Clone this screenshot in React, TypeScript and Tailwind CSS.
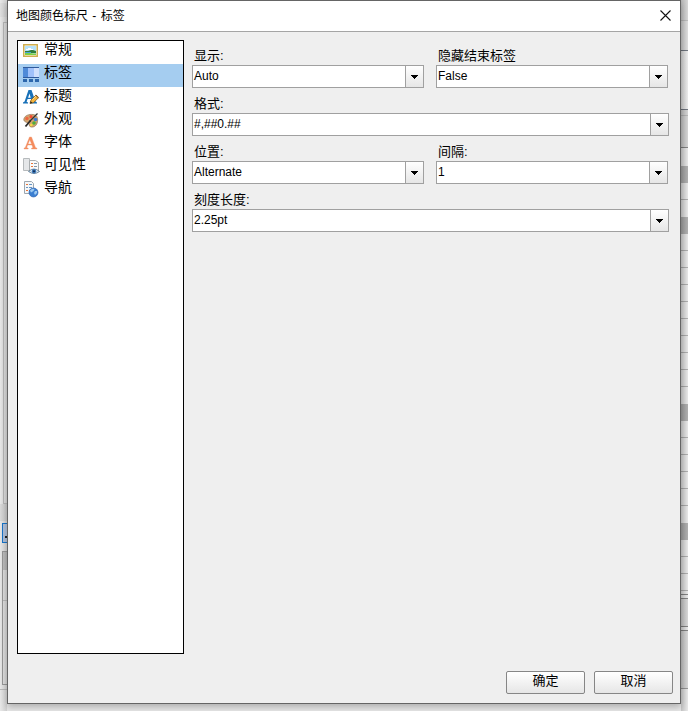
import type { ReactNode } from "react";

const cjk = "font-['Liberation_Sans','Noto_Sans_CJK_SC',sans-serif]";

function GeneralIcon() {
  return (
    <svg width="16" height="16" viewBox="0 1 16 16">
      <rect x="0.75" y="2.75" width="13.5" height="11.5" fill="#fffdf0" stroke="#cfae4e" strokeWidth="1.5" />
      <rect x="2" y="4" width="11" height="9" fill="#b5e2fa" />
      <path d="M3 7h2V6h3v1h2v1H3z" fill="#fff" />
      <path d="M2 9h3l3-1h2l3 1v2H2z" fill="#2f7d3c" />
      <path d="M2 11h5l3 .5h3V13H2z" fill="#7cd044" />
      <path d="M2 10.500h6" stroke="#48a5d8" />
    </svg>
  );
}

function LabelsIcon() {
  return (
    <svg width="16" height="16" viewBox="0 -1 16 16" shapeRendering="crispEdges">
      <rect width="16" height="11" fill="#2f5a9c" />
      <rect y="1" width="5" height="9" fill="#4f8ad8" />
      <rect x="5" y="1" width="6" height="9" fill="#a0c1fa" />
      <rect x="11" y="1" width="5" height="9" fill="#cfdffc" />
      <path d="M0 12h4v3H0zM6 12h4v3H6zM12 12h4v3h-4z" fill="#2d67ac" />
    </svg>
  );
}

function TitleIcon() {
  return (
    <svg width="16" height="16" viewBox="0 0 16 16">
      <path d="M5.5 1h3l4 11.5 1.5 1v1H8v-1l1-.7-.8-2.800H4.600l-1 2.800 1.400.7v1H0v-1l1.600-1zM6.500 4.500 5.100 8.700h2.600z" fill="#1971b8" />
      <path d="m7 14.500 1-3.500 5-5 2.700 2.500-5 5z" fill="#f4b63e" stroke="#8b5a18" strokeWidth=".8" />
      <path d="m7 14.500.7-2.300 1.700 1.600z" fill="#222" />
      <path d="m9.500 10.500 3.500-3.500" stroke="#fbdc8e" />
      <path d="m12.700 6.300 2.600 2.400" stroke="#7a4a28" />
    </svg>
  );
}

function AppearanceIcon() {
  return (
    <svg width="16" height="16" viewBox="0 0 16 16">
      <path d="M1 6.500C2 3.500 6 2 10 2.500c4 .5 5 3 4.500 7s-3.500 6-6.500 5.500c-2.500-.5-1-3-3-4S0 9.500 1 6.500z" fill="#d3a46f" stroke="#937454" strokeWidth=".7" />
      <circle cx="4" cy="6.500" r="1.700" fill="#ef6742" />
      <circle cx="8" cy="4.700" r="1.600" fill="#f34b33" />
      <circle cx="12.500" cy="7.500" r="1.800" fill="#397bd4" />
      <circle cx="11" cy="11" r="1.800" fill="#4fae3c" />
      <circle cx="8.300" cy="13" r="1.300" fill="#f6dc43" />
      <path d="M14.500 1.500 7 9" stroke="#333" strokeWidth="1.200" />
      <path d="m7.500 8.500-5 6" stroke="#292929" strokeWidth="1.800" />
    </svg>
  );
}

function FontIcon() {
  return (
    <svg width="16" height="16" viewBox="0 0 16 16">
      <path d="M6.500 2h2l4 10.500 1.500.7v.8H8.500v-.8l1.400-.7-1-2.500H4.700l-1 2.500 1.500.7v.8H1v-.8l1.300-.7zM6.800 4.800 5.100 9h3.400z" fill="#f58a5b" stroke="#ef9d76" strokeWidth=".4" />
    </svg>
  );
}

function VisibilityIcon() {
  return (
    <svg width="17" height="17" viewBox="0 1 17 17">
      <path d="M.5 1.500h6v12h-6z" fill="#e5e7e9" stroke="#b6babc" />
      <path d="M6.500 3.500h6l3 2v9h-9z" fill="#fafafa" stroke="#a9adaf" />
      <path d="M8 6.500h2M8 9.500h2" stroke="#e9763a" />
      <path d="M11 6.500h3M11 9.500h3" stroke="#8798a8" />
      <path d="M5.500 14.500q5.500-5 11 0-5.500 4-11 0z" fill="#dbe9f4" stroke="#50708b" strokeWidth=".8" />
      <circle cx="11" cy="14.300" r="2.200" fill="#3974b5" />
      <circle cx="11" cy="14.300" r="1" fill="#112a4e" />
    </svg>
  );
}

function NavigationIcon() {
  return (
    <svg width="16" height="17" viewBox="0 1 16 17">
      <path d="M1.500 1.500h7l2 2v10h-9z" fill="#f5f7f8" stroke="#9ca7b0" />
      <path d="M3 4.500h2M3 10.500h2" stroke="#e9763a" />
      <path d="M6 4.500h3M6 7.500h3M3 7.500h2M6 10.500h2" stroke="#6594c4" />
      <circle cx="10.500" cy="12.500" r="4.500" fill="#3b7fd1" stroke="#2e62ae" strokeWidth=".6" />
      <path d="M7 10.500q2-2.500 4.500-1.500l-1 2-2.500 1.500zM12 11h2v2l-2 2-1-2z" fill="#9dcaf1" />
    </svg>
  );
}

const sections: { name: string; icon: ReactNode }[] = [
  { name: "常规", icon: <GeneralIcon /> },
  { name: "标签", icon: <LabelsIcon /> },
  { name: "标题", icon: <TitleIcon /> },
  { name: "外观", icon: <AppearanceIcon /> },
  { name: "字体", icon: <FontIcon /> },
  { name: "可见性", icon: <VisibilityIcon /> },
  { name: "导航", icon: <NavigationIcon /> },
];

function Combo({ label, value, className = "" }: { label: string; value: string; className?: string }) {
  return (
    <div className={`h-12 ${className}`}>
      <div className="h-[18px] pl-0.5 text-[13px] leading-[17px]">{label}</div>
      <div className="flex h-[23px] border border-[#a0a0a0] bg-white">
        <div className="flex-1 pl-px font-['Liberation_Sans',sans-serif] text-xs leading-[20px]">{value}</div>
        <button className="flex w-[18px] items-center justify-center border-l border-[#a0a0a0] bg-linear-to-b from-white to-[#e6e6e6] pr-px">
          <svg width="7" height="4" viewBox="0 0 7 4" shapeRendering="crispEdges">
            <path d="M0 0h7v1H0zM1 1h5v1H1zM2 2h3v1H2zM3 3h1v1H3z" />
          </svg>
        </button>
      </div>
    </div>
  );
}

function DialogButton({ children }: { children: ReactNode }) {
  return (
    <button className="h-[23px] w-[79px] rounded-[2px] border border-[#868686] bg-linear-to-b from-white to-[#e6e6e6] pb-[3px] text-[13px] leading-[18px]">
      {children}
    </button>
  );
}

// Edge of the property grid showing behind the dialog: [height, colour]
const rightEdge: [number, string][] = [
  [20, "#d8d8d8"], [1, "#c0c0c0"], [29, "#dedede"], [1, "#737983"], [58, "#ececec"], [1, "#737983"],
  [5, "#d5d5d5"], [1, "#b9b9b9"], [31, "#d5d5d5"], [1, "#858585"], [18, "#e8e8e8"], [17, "#b0b0b0"],
  [16, "#e8e8e8"], [1, "#b0b0b0"], [17, "#e8e8e8"], [17, "#b0b0b0"],
  ...Array.from({ length: 9 }).flatMap((): [number, string][] => [[16, "#e8e8e8"], [1, "#b0b0b0"]]),
  [17, "#e8e8e8"], [17, "#b0b0b0"],
  ...Array.from({ length: 5 }).flatMap((): [number, string][] => [[16, "#e8e8e8"], [1, "#b0b0b0"]]),
  [17, "#e8e8e8"], [17, "#b0b0b0"],
  ...Array.from({ length: 3 }).flatMap((): [number, string][] => [[16, "#e8e8e8"], [1, "#b0b0b0"]]),
  [3, "#e8e8e8"], [1, "#858585"], [3, "#e8e8e8"], [1, "#858585"], [27, "#d8d8d8"], [1, "#858585"],
  [3, "#e8e8e8"], [1, "#858585"], [57, "#d8d8d8"], [1, "#999999"], [22, "#e8e8e8"],
];

export default function App() {
  return (
    <div className={`flex h-[711px] w-[688px] overflow-hidden bg-[#e8e8e8] text-black ${cjk}`}>
      <div className="flex w-[7px] flex-col bg-linear-to-r from-[#e8e8e8] to-[#d2d2d2]">
        <div className="h-[3px]" />
        <div className="h-[14px] bg-black/3" />
        <div className="h-[5px]" />
        <div className="ml-[3px] h-[482px] border-y border-l border-[#b5b5b5]" />
        <div className="h-[17px] bg-black/6" />
        <div className="mt-[2px] ml-[2px] flex h-5 items-end justify-end border border-r-0 border-[#1874c8] bg-[#afbfd8] pb-1">
          <div className="size-[2px] bg-[#222]" />
        </div>
        <div className="mt-2 ml-[2px] h-[134px] border border-r-0 border-[#979797]">
          <div className="h-[18px] bg-black/15" />
          <div className="h-[31px] border-b border-[#b8b8b8]" />
        </div>
        <div className="mt-1 h-px bg-[#b8b8b8]" />
      </div>

      <div className="flex w-[674px] flex-col">
        <div className="z-10 flex h-[704px] flex-col border border-[#656565] bg-[#efefef] shadow-[0_3px_7px_rgba(0,0,0,0.25)]">
          <div className="flex h-[31px] items-center justify-between border-b border-[#a5a5a5] bg-white pr-[9px] pl-2">
            <h1 className="text-xs [word-spacing:1px]">地图颜色标尺 - 标签</h1>
            <svg className="mb-0.5" width="11" height="11" viewBox="0 0 11 11">
              <path d="M.5.5l10 10m0-10-10 10" stroke="#111" strokeWidth="1.1" />
            </svg>
          </div>

          <div className="flex px-[9px] pt-2">
            <ul className="h-[614px] w-[167px] border border-black bg-white">
              {sections.map((s) => (
                <li
                  key={s.name}
                  className={`flex h-[23px] items-start pt-[2px] pl-[5px] text-sm leading-[12px] ${s.name === "标签" ? "bg-[#a5cdf0]" : ""}`}
                >
                  <div className="w-[21px] shrink-0">{s.icon}</div>
                  <span>{s.name}</span>
                </li>
              ))}
            </ul>

            <div className="ml-2 w-[477px] pt-[7px]">
              <div className="flex">
                <Combo label="显示:" value="Auto" className="w-[232px]" />
                <Combo label="隐藏结束标签" value="False" className="ml-3 w-[232px]" />
              </div>
              <Combo label="格式:" value="#,##0.##" />
              <div className="flex">
                <Combo label="位置:" value="Alternate" className="w-[232px]" />
                <Combo label="间隔:" value="1" className="ml-3 w-[232px]" />
              </div>
              <Combo label="刻度长度:" value="2.25pt" />
            </div>
          </div>

          <div className="mt-[17px] flex justify-end gap-[9px] pr-[7px]">
            <DialogButton>确定</DialogButton>
            <DialogButton>取消</DialogButton>
          </div>
        </div>
      </div>

      <div className="relative flex w-[7px] flex-col">
        {rightEdge.map(([height, color], i) => (
          <div key={i} className="shrink-0" style={{ height, backgroundColor: color }} />
        ))}
        <div className="absolute inset-0 bg-linear-to-r from-black/15 to-transparent" />
      </div>
    </div>
  );
}
